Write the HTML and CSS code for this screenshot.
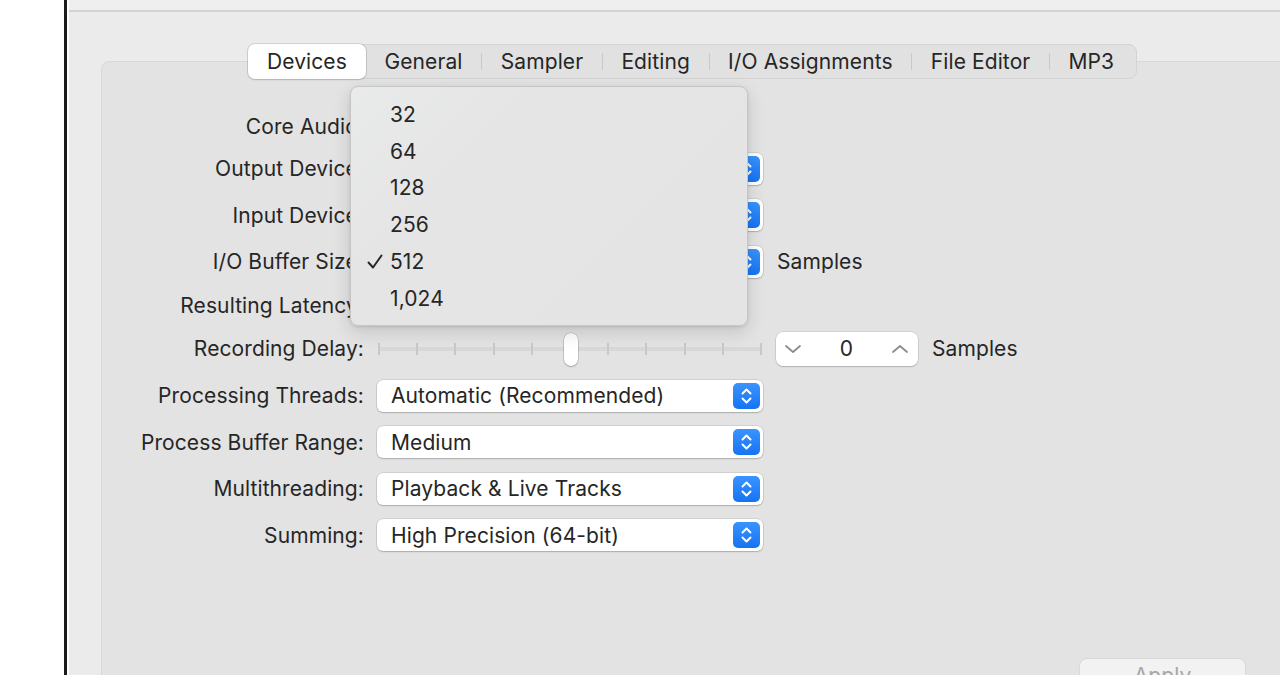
FILE: index.html
```html
<!DOCTYPE html>
<html>
<head>
<meta charset="utf-8">
<link rel="stylesheet" href="styles.css">
</head>
<body>
<div class="screen">
  <div class="desk"></div>
  <div class="edge"></div>
  <div class="window">
    <div class="toolbar"></div>
    <div class="body">
      <div class="panel">
        <div class="tabs">
          <div class="tab sel">Devices</div>
          <div class="tab">General</div>
          <div class="sep"></div>
          <div class="tab">Sampler</div>
          <div class="sep"></div>
          <div class="tab">Editing</div>
          <div class="sep"></div>
          <div class="tab">I/O Assignments</div>
          <div class="sep"></div>
          <div class="tab">File Editor</div>
          <div class="sep"></div>
          <div class="tab">MP3</div>
        </div>

        <div class="form">
          <div class="row text-row"><div class="label">Core Audio:</div></div>
          <div class="row">
            <div class="label">Output Device:</div>
            <div class="popup"><span></span><i class="arrows"><svg viewBox="0 0 27 26" width="27" height="26"><path d="M9.5 10.5 L13.5 6.5 L17.5 10.5 M9.5 15.5 L13.5 19.5 L17.5 15.5" fill="none" stroke="#fff" stroke-width="2" stroke-linecap="round" stroke-linejoin="round"/></svg></i></div>
          </div>
          <div class="row">
            <div class="label">Input Device:</div>
            <div class="popup"><span></span><i class="arrows"><svg viewBox="0 0 27 26" width="27" height="26"><path d="M9.5 10.5 L13.5 6.5 L17.5 10.5 M9.5 15.5 L13.5 19.5 L17.5 15.5" fill="none" stroke="#fff" stroke-width="2" stroke-linecap="round" stroke-linejoin="round"/></svg></i></div>
          </div>
          <div class="row">
            <div class="label">I/O Buffer Size:</div>
            <div class="popup"><span></span><i class="arrows"><svg viewBox="0 0 27 26" width="27" height="26"><path d="M9.5 10.5 L13.5 6.5 L17.5 10.5 M9.5 15.5 L13.5 19.5 L17.5 15.5" fill="none" stroke="#fff" stroke-width="2" stroke-linecap="round" stroke-linejoin="round"/></svg></i></div>
            <div class="unit">Samples</div>
          </div>
          <div class="row latency-row"><div class="label">Resulting Latency:</div></div>
          <div class="row">
            <div class="label">Recording Delay:</div>
            <div class="slider">
              <div class="track">
                <i></i><i></i><i></i><i></i><i></i><i></i><i></i><i></i><i></i><i></i><i></i>
              </div>
              <div class="thumb"></div>
            </div>
            <div class="stepper">
              <svg viewBox="0 0 20 12" width="20" height="12"><path d="M3 3 L10 9 L17 3" fill="none" stroke="#8c8c8c" stroke-width="1.8" stroke-linecap="round" stroke-linejoin="round"/></svg>
              <span>0</span>
              <svg viewBox="0 0 20 12" width="20" height="12"><path d="M3 9 L10 3 L17 9" fill="none" stroke="#8c8c8c" stroke-width="1.8" stroke-linecap="round" stroke-linejoin="round"/></svg>
            </div>
            <div class="unit">Samples</div>
          </div>
          <div class="row">
            <div class="label">Processing Threads:</div>
            <div class="popup"><span>Automatic (Recommended)</span><i class="arrows"><svg viewBox="0 0 27 26" width="27" height="26"><path d="M9.5 10.5 L13.5 6.5 L17.5 10.5 M9.5 15.5 L13.5 19.5 L17.5 15.5" fill="none" stroke="#fff" stroke-width="2" stroke-linecap="round" stroke-linejoin="round"/></svg></i></div>
          </div>
          <div class="row">
            <div class="label">Process Buffer Range:</div>
            <div class="popup"><span>Medium</span><i class="arrows"><svg viewBox="0 0 27 26" width="27" height="26"><path d="M9.5 10.5 L13.5 6.5 L17.5 10.5 M9.5 15.5 L13.5 19.5 L17.5 15.5" fill="none" stroke="#fff" stroke-width="2" stroke-linecap="round" stroke-linejoin="round"/></svg></i></div>
          </div>
          <div class="row">
            <div class="label">Multithreading:</div>
            <div class="popup"><span>Playback &amp; Live Tracks</span><i class="arrows"><svg viewBox="0 0 27 26" width="27" height="26"><path d="M9.5 10.5 L13.5 6.5 L17.5 10.5 M9.5 15.5 L13.5 19.5 L17.5 15.5" fill="none" stroke="#fff" stroke-width="2" stroke-linecap="round" stroke-linejoin="round"/></svg></i></div>
          </div>
          <div class="row">
            <div class="label">Summing:</div>
            <div class="popup"><span>High Precision (64-bit)</span><i class="arrows"><svg viewBox="0 0 27 26" width="27" height="26"><path d="M9.5 10.5 L13.5 6.5 L17.5 10.5 M9.5 15.5 L13.5 19.5 L17.5 15.5" fill="none" stroke="#fff" stroke-width="2" stroke-linecap="round" stroke-linejoin="round"/></svg></i></div>
          </div>
        </div>

        <div class="footer">
          <div class="apply">Apply</div>
        </div>

        <div class="menu">
          <div class="item">32</div>
          <div class="item">64</div>
          <div class="item">128</div>
          <div class="item">256</div>
          <div class="item checked"><svg class="check" viewBox="0 0 18 18" width="18" height="18"><path d="M2.5 9.5 L7 14.5 L15.5 2.5" fill="none" stroke="#262626" stroke-width="2" stroke-linecap="round" stroke-linejoin="round"/></svg>512</div>
          <div class="item">1,024</div>
        </div>
      </div>
    </div>
  </div>
</div>
</body>
</html>
```

FILE: styles.css
```css
html, body {
  margin: 0;
  padding: 0;
  width: 1280px;
  height: 675px;
  overflow: hidden;
  background: #ffffff;
  font-family: Inter, "Noto Sans", sans-serif;
  font-size: 21px;
  letter-spacing: 0.1px;
  color: #262626;
}

.screen {
  display: flex;
  width: 1280px;
  height: 675px;
}

.desk {
  width: 64px;
  flex: none;
  background: #ffffff;
}

.edge {
  width: 3px;
  flex: none;
  background: #1c1c1c;
  border-right: 2px solid #ffffff;
}

.window {
  flex: 1;
  min-width: 0;
  background: #ebebeb;
  display: flex;
  flex-direction: column;
}

.toolbar {
  height: 10px;
  flex: none;
  background: #efefef;
  border-bottom: 2px solid #d3d3d3;
}

.body {
  padding-left: 32px;
  padding-top: 49px;
}

.panel {
  position: relative;
  width: 1300px;
  height: 700px;
  box-sizing: border-box;
  background: #e3e3e3;
  border: 1px solid #d8d8d8;
  border-radius: 8px;
}

/* Tabs */
.tabs {
  display: flex;
  align-items: center;
  margin-top: -18px;
  margin-left: 146px;
  width: fit-content;
  height: 35px;
  box-sizing: border-box;
  background: #e1e1e1;
  border: 1px solid #d4d4d4;
  border-radius: 8px;
  padding-right: 3px;
}

.tab {
  height: 100%;
  display: flex;
  align-items: center;
  padding: 0 18.6px;
  box-sizing: border-box;
  white-space: nowrap;
}

.tab.sel {
  background: #ffffff;
  border-radius: 7px;
  margin-left: -1px;
  height: 35px;
  padding: 0 19px;
  box-shadow: 0 0 0 1px rgba(0,0,0,0.10), 0 1px 2px rgba(0,0,0,0.12);
}

.sep {
  width: 1px;
  height: 17px;
  background: #c9c9c9;
}

/* Form */
.form {
  display: flex;
  flex-direction: column;
  gap: 14.6px;
  margin-top: 35px;
}

.row {
  display: flex;
  align-items: center;
  height: 32px;
}

.text-row { height: 24px; }
.latency-row { height: 26px; }

.label {
  flex: none;
  text-align: right;
  padding-right: 13px;
  box-sizing: border-box;
  width: 275px;
  white-space: nowrap;
}

.popup {
  width: 386px;
  height: 32px;
  flex: none;
  box-sizing: border-box;
  background: #ffffff;
  border-radius: 6px;
  box-shadow: 0 0 0 0.5px rgba(0,0,0,0.16), 0 1px 1.5px rgba(0,0,0,0.18);
  display: flex;
  align-items: center;
  justify-content: space-between;
  padding-left: 14px;
  padding-right: 3px;
}

.arrows {
  width: 27px;
  height: 26px;
  border-radius: 5px;
  background: linear-gradient(#3a93ff, #1674f2);
  display: block;
}

.arrows svg { display: block; }

.unit {
  margin-left: 14px;
  white-space: nowrap;
}

/* Slider */
.slider {
  position: relative;
  width: 386px;
  height: 34px;
  flex: none;
  display: flex;
  align-items: center;
}

.track {
  width: 384px;
  height: 4px;
  margin-left: 1px;
  background: #d7d7d7;
  border-radius: 2px;
  display: flex;
  justify-content: space-between;
  align-items: center;
}

.track i {
  width: 2px;
  height: 12px;
  background: #c8c8c8;
  display: block;
}

.thumb {
  position: absolute;
  left: 187px;
  top: 1px;
  width: 14px;
  height: 33px;
  box-sizing: border-box;
  background: #ffffff;
  border-radius: 7px;
  box-shadow: 0 0 0 0.5px rgba(0,0,0,0.2), 0 1px 2px rgba(0,0,0,0.2);
}

.stepper {
  margin-left: 13px;
  width: 142px;
  height: 34px;
  flex: none;
  box-sizing: border-box;
  background: #ffffff;
  border-radius: 7px;
  box-shadow: 0 0 0 0.5px rgba(0,0,0,0.14), 0 1px 1.5px rgba(0,0,0,0.16);
  display: flex;
  align-items: center;
  justify-content: space-between;
  padding: 0 8px 0 7px;
}

.stepper svg { display: block; }

/* Footer */
.footer {
  margin-top: 107px;
  padding-left: 977px;
}

.apply {
  width: 167px;
  height: 32px;
  box-sizing: border-box;
  background: #f2f2f2;
  border: 1px solid #d9d9d9;
  border-radius: 8px;
  color: #a6a6a6;
  text-align: center;
  line-height: 34px;
}

/* Menu overlay */
.menu {
  position: absolute;
  left: 248px;
  top: 24px;
  width: 398px;
  box-sizing: border-box;
  padding: 9px 0 8px;
  background: linear-gradient(135deg, #e9eaea 0%, #e5e5e5 30%, #e4e4e4 100%);
  border: 1px solid #c6c6c6;
  border-radius: 8px;
  box-shadow: 0 6px 18px rgba(0,0,0,0.14), 0 1px 3px rgba(0,0,0,0.10);
}

.item {
  height: 36.8px;
  display: flex;
  align-items: center;
  padding-left: 39px;
  position: relative;
}

.check {
  position: absolute;
  left: 15px;
  top: 10px;
}
```
